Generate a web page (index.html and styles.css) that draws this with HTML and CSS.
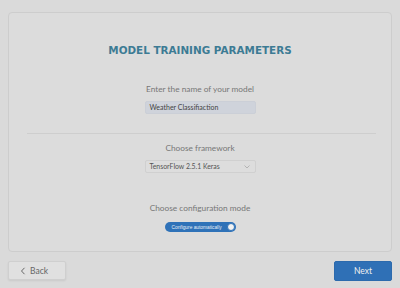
FILE: index.html
```html
<!DOCTYPE html>
<html>
<head>
<meta charset="utf-8">
<link rel="stylesheet" href="styles.css">
</head>
<body>
<div class="card">
  <h1 class="title">MODEL TRAINING PARAMETERS</h1>
  <div class="label first">Enter the name of your model</div>
  <div class="input">Weather Classifiaction</div>
  <div class="divider"></div>
  <div class="label second">Choose framework</div>
  <div class="select">
    <span>TensorFlow 2.5.1 Keras</span>
    <svg class="chev" width="6" height="4" viewBox="0 0 6 4"><path d="M0.5 0.5 L3 3 L5.5 0.5" fill="none" stroke="#aaa" stroke-width="0.8"/></svg>
  </div>
  <div class="label third">Choose configuration mode</div>
  <div class="toggle"><span class="toggle-text">Configure automatically</span><span class="knob"></span></div>
</div>
<div class="footer">
  <button class="btn back"><svg width="6" height="8" viewBox="0 0 6 8"><path d="M4.5 0.8 L1.5 4 L4.5 7.2" fill="none" stroke="#666" stroke-width="1"/></svg><span>Back</span></button>
  <button class="btn next">Next</button>
</div>
</body>
</html>
```
FILE: styles.css
```css
html, body {
  margin: 0;
  padding: 0;
  background: #dadada;
}
body {
  width: 400px;
  height: 288px;
  padding: 12px 8px 0;
  box-sizing: border-box;
  font-family: Lato, "Open Sans", sans-serif;
}
.card {
  height: 240px;
  box-sizing: border-box;
  border: 1px solid #cdcdcd;
  border-radius: 4px;
  background: #dcdcdc;
  display: flex;
  flex-direction: column;
  align-items: center;
}
.title {
  margin: 30px 0 0;
  font-family: "DejaVu Sans", sans-serif;
  font-weight: bold;
  font-size: 10.4px;
  line-height: 14px;
  color: #3c7b94;
  letter-spacing: 0;
}
.label {
  font-size: 8.3px;
  line-height: 12px;
  color: #777;
}
.label.first { margin-top: 26px; }
.label.second { margin-top: 8px; }
.label.third { margin-top: 29px; }
.input {
  margin-top: 6px;
  width: 111px;
  height: 13px;
  box-sizing: border-box;
  background: #cfd3db;
  border: 1px solid #cbcfd7;
  border-radius: 2px;
  font-size: 7px;
  line-height: 11px;
  color: #444;
  padding-left: 4px;
}
.divider {
  align-self: stretch;
  margin: 19px 15px 0 18px;
  height: 1px;
  background: #cecece;
}
.select {
  margin-top: 6px;
  width: 111px;
  height: 13px;
  box-sizing: border-box;
  border: 1px solid #d0d0d0;
  border-radius: 2px;
  background: #dddddd;
  font-size: 6.9px;
  line-height: 11px;
  color: #555;
  padding: 0 5px 0 4px;
  display: flex;
  align-items: center;
  justify-content: space-between;
}
.toggle {
  margin-top: 8px;
  width: 71px;
  height: 10px;
  box-sizing: border-box;
  border-radius: 5px;
  background: #2f72b8;
  display: flex;
  align-items: center;
  justify-content: space-between;
  padding: 0 1px 0 7px;
}
.toggle-text {
  font-family: "Liberation Sans", sans-serif;
  font-size: 4.8px;
  white-space: nowrap;
  color: #e8eef6;
}
.knob {
  width: 8px;
  height: 8px;
  box-sizing: border-box;
  border-radius: 50%;
  background: #f2f2f2;
  border: 1px solid #2f72b8;
}
.footer {
  margin-top: 9px;
  display: flex;
  justify-content: space-between;
}
.btn {
  width: 58px;
  height: 19px;
  box-sizing: border-box;
  border-radius: 2px;
  font-family: Lato, "Open Sans", sans-serif;
  font-size: 8.5px;
  padding: 0;
  display: flex;
  align-items: center;
  justify-content: center;
}
.back {
  background: #e0e0e0;
  border: 1px solid #cfcfcf;
  box-shadow: 0 1px 2px rgba(0,0,0,0.08);
  color: #666;
  gap: 4px;
  padding-right: 6px;
}
.next {
  height: 20px;
  background: #2f70b6;
  border: 1px solid #2c6aad;
  color: #f0f0f0;
}
```
